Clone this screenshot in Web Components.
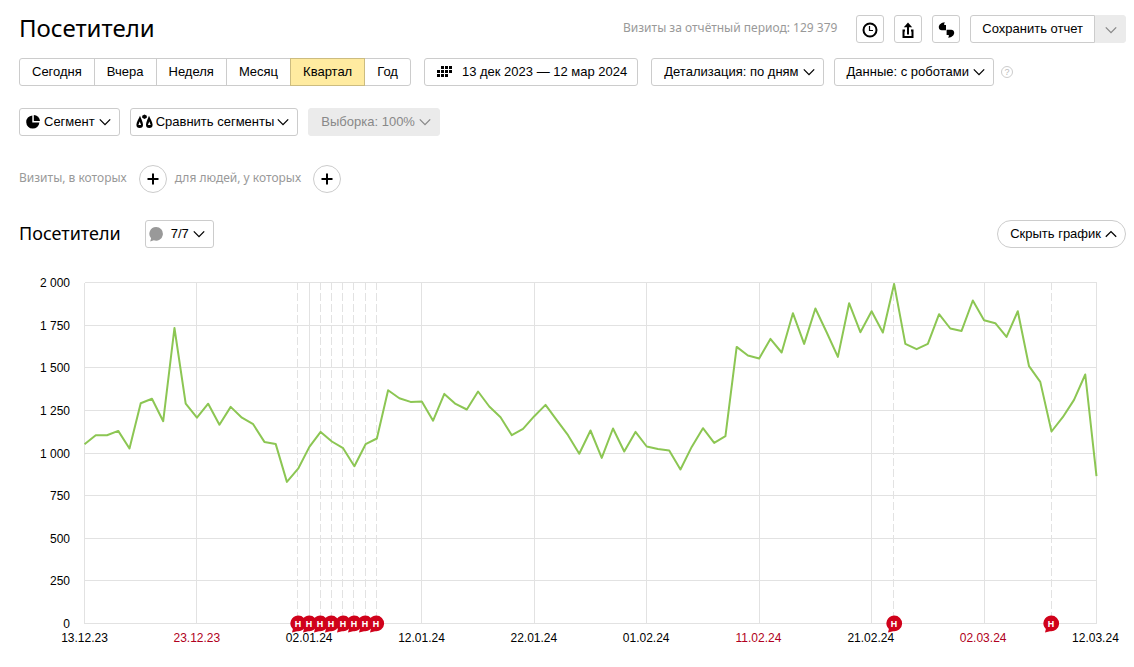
<!DOCTYPE html>
<html lang="ru">
<head>
<meta charset="utf-8">
<title>Посетители</title>
<style>
  body { margin: 0; background: #fff; color: #000; font: 13px/16px "Liberation Sans", Arial, sans-serif; }
</style>
</head>
<body>
<visitors-report></visitors-report>
<script>
const define = (name, html, setup) => {
  const template = document.createElement('template');
  template.innerHTML = html;
  customElements.define(name, class extends HTMLElement {
    connectedCallback() {
      if (this.shadowRoot) return;
      this.attachShadow({ mode: 'open' }).append(template.content.cloneNode(true));
      if (setup) setup(this, this.shadowRoot);
    }
  });
};

const ICONS = {
  down: [12, 12, '<path d="M.8 3.400 6 8.600l5.200-5.200" fill="none" stroke="currentColor" stroke-width="1.300"/>'],
  up: [12, 12, '<path d="M.8 8.800 6 3.600l5.200 5.200" fill="none" stroke="currentColor" stroke-width="1.300"/>'],
  clock: [18, 18, '<circle cx="9" cy="9" r="6.500" fill="none" stroke="currentColor" stroke-width="2"/><path d="M8.500 5v4.500h3.500" fill="none" stroke="currentColor" stroke-width="1.200"/>'],
  share: [18, 18, '<path d="M6 9.500H4.500V16h9V9.500H12" fill="none" stroke="currentColor" stroke-width="2"/><path d="M9 13.500V5" fill="none" stroke="currentColor" stroke-width="2"/><path d="M4.800 6.200 9 1.600l4.200 4.600z" fill="currentColor"/>'],
  quotes: [18, 18, '<path d="M7.800 1.200C4.300 1.600 1.800 3.500 1.800 6.200c0 1.800 1.300 3 3 3H9V4H7.200C7.100 2.900 7.300 2 7.800 1.200z" fill="currentColor"/><path d="M11.200 16.800c3.500-.4 6-2.300 6-5 0-1.800-1.300-3-3-3H9.600V14h2.200c.1 1.100-.1 2-.6 2.800z" fill="currentColor"/>'],
  calendar: [16, 12, '<path d="M4 0h3v3H4zM8 0h3v3H8zM12 0h3v3h-3zM0 4h3v3H0zM4 4h3v3H4zM8 4h3v3H8zM12 4h3v3h-3zM0 8h3v3H0zM4 8h3v3H4zM8 8h3v3H8z" fill="currentColor"/>'],
  pie: [14, 14, '<path d="M6.300.4v7.100h7.100A6.600 6.600 0 1 1 6.300.400z" fill="currentColor"/><path d="M7.800 0A6.300 6.300 0 0 1 14 6H7.800z" fill="currentColor"/>'],
  compare: [17, 16, '<path fill-rule="evenodd" d="M4 1.800C4.800 4.500 7 7.700 7 10.800A3.300 3.300 0 0 1 .4 10.800C.4 7.700 3.200 4.500 4 1.800zM3.700 7.500 2.400 11h2.700zM13 1.800c.8 2.700 3.600 5.900 3.600 9a3.300 3.300 0 0 1-6.600 0c0-3.100 2.200-6.300 3-9zM13.300 7.500 11.900 11h2.800z" fill="currentColor"/><path d="M6.200 1.800 8.500.6l2.300 1.200v2L8.500 5 6.200 3.800z" fill="currentColor"/>'],
  bubble: [14, 16, '<path d="M7 1a6.800 6.800 0 1 1-2.200 13.200L1.200 15.600l.9-3.300A6.800 6.800 0 0 1 7 1z" fill="#999"/>'],
  plus: [12, 12, '<path d="M6 .5v11M.5 6h11" fill="none" stroke="currentColor" stroke-width="2"/>']
};
define('m-icon', '<style>:host{display:block;flex:none}svg{display:block}</style>', (host, root) => {
  const [w, h, body] = ICONS[host.getAttribute('name')];
  root.innerHTML += `<svg width="${w}" height="${h}" viewBox="0 0 ${w} ${h}" aria-hidden="true">${body}</svg>`;
});

define('m-button', `
<style>
  :host { display: block; flex: none; }
  button { box-sizing: border-box; width: 100%; height: 28px; display: flex; align-items: center; gap: 4px; margin: 0;
    padding: 0 8px 0 12px; border: 1px solid #ccc; border-radius: 3px; background: #fff; color: inherit; font: inherit; white-space: nowrap; cursor: pointer; }
  slot { display: contents; }
  .label { flex: 1; }
  :host([lead]) button { padding-left: 6px; }
  :host([tight]) button { padding-left: 5px; gap: 3px; }
  :host([bubble]) button { padding-left: 3px; }
  :host([bubble]) .label { padding-left: 4px; }
  :host([date]) button { padding-right: 10px; gap: 9px; }
  :host([square]) button { width: 28px; padding: 2px 0 0; justify-content: center; }
  :host([square]) .label, :host([round]) .label { display: none; }
  :host([round]) button { width: 28px; padding: 0; justify-content: center; border-radius: 14px; }
  :host([pill]) button { border-radius: 14px; }
  :host([muted]) button { background: #ebebeb; border-color: #ebebeb; color: #888; cursor: default; }
  :host([main]) button { padding: 0 11px; border-radius: 3px 0 0 3px; }
  :host([more]) button { width: 31px; padding: 2px 0 0; border-radius: 0 3px 3px 0; justify-content: center; }
  :host([more]) .label { display: none; }
</style>
<button type="button"><slot name="before"></slot><span class="label"><slot></slot></span><slot name="after"></slot></button>`,
(host, root) => {
  const b = root.querySelector('button');
  if (host.hasAttribute('hint')) b.setAttribute('aria-label', host.getAttribute('hint'));
  if (host.hasAttribute('disabled')) b.disabled = true;
});

define('period-switch', `
<style>
  :host { display: flex; flex: none; }
  button { box-sizing: border-box; height: 28px; margin: 0 0 0 -1px; padding: 0 12px; border: 1px solid #ccc; background: #fff; color: inherit; font: inherit; white-space: nowrap; cursor: pointer; }
  button:first-of-type { margin-left: 0; border-radius: 3px 0 0 3px; }
  button:last-of-type { border-radius: 0 3px 3px 0; }
  button[aria-pressed=true] { background: #ffeba0; border-color: #ccbc80; z-index: 1; position: relative; }
</style>`, (host, root) => {
  for (const name of host.getAttribute('options').split(',')) {
    const b = document.createElement('button');
    b.type = 'button';
    b.textContent = name;
    b.setAttribute('aria-pressed', name === host.getAttribute('value'));
    root.append(b);
  }
});

define('note-marker', `
<style>
  :host { display: block; position: absolute; width: 16px; height: 20px; margin-left: -8px; }
  svg { display: block; overflow: visible; }
  text { font: bold 9px "Noto Sans", sans-serif; fill: #fff; text-anchor: middle; }
</style>
<svg width="16" height="20" viewBox="0 0 16 20"><path d="M8 .5a7.900 7.900 0 1 1-1 15.700L2 17.500l.9-3.400A7.900 7.900 0 0 1 8 .500z" fill="#d0021b"/><text x="8" y="12">Н</text></svg>`);

// Distance of each day's point below the top of a plot 341 units tall.
const SERIES = [161.7,152.7,152.7,148.4,166,120.7,116.2,138.7,45.500,121.2,135.2,121.2,142.2,124.4,135.2,141.7,159.4,161.4,
  199.4,186.2,164.4,149.400,159,165.7,183.7,161.7,156,107.7,115.7,119.4,119,138.2,111.4,121.4,127,109,124,134.7,152.7,146.4,
  133.7,122.4,137.7,152.7,171.2,148,175.4,146,169,149.4,164,166.4,168,187,164.4,145.7,160.400,153.7,64.4,73,76,56.4,70,30.7,
  61.4,26,49.700,74.4,20.7,49.700,28.700,50,1.400,61.4,66.7,61.4,31.700,46,48.4,18,37.7,40.7,54.4,28.700,83.700,99.400,149,134.7,117.4,92,193.7];
const HOLIDAYS = [19, 20, 21, 22, 23, 24, 25, 26, 72, 86];
const DATES = ['13.12.23', '23.12.23!', '02.01.24', '12.01.24', '22.01.24', '01.02.24', '11.02.24!', '21.02.24', '02.03.24!', '12.03.24'];

define('visitors-chart', `
<style>
  :host { display: grid; grid-template-columns: 51px 1fr; column-gap: 14px; padding-right: 30px; font-size: 12px; line-height: 16px; }
  .y { display: flex; flex-direction: column; justify-content: space-between; height: 357px; text-align: right; }
  .plot { position: relative; height: 341px; margin-top: 7px; }
  svg { display: block; width: 100%; height: 100%; overflow: visible; }
  .grid line { stroke: #e2e2e2; shape-rendering: crispEdges; }
  .notes line { stroke: #e2e2e2; stroke-dasharray: 8 3; shape-rendering: crispEdges; }
  polyline { fill: none; stroke: #8cc653; stroke-width: 2; vector-effect: non-scaling-stroke; stroke-linejoin: round; }
  .x { grid-column: 2; display: flex; justify-content: space-between; margin-top: -2px; }
  .x span { width: 1px; display: flex; justify-content: center; white-space: nowrap; }
  .x .off { color: #b00020; }
  note-marker { top: 333px; }
</style>
<div class="y"></div>
<div class="plot"><svg role="img" aria-label="Посетители по дням">
  <g class="notes"></g><g class="grid" transform="translate(.5 .5)"></g>
  <svg x="0.500" y="0.500" width="100%" height="341" viewBox="0 0 90 341" preserveAspectRatio="none"><polyline/></svg>
</svg></div>
<div class="x"></div>`, (host, root) => {
  const $ = s => root.querySelector(s);
  $('.y').innerHTML = ['2 000', '1 750', '1 500', '1 250', '1 000', '750', '500', '250', '0'].map(t => `<span>${t}</span>`).join('');
  let grid = '';
  for (let i = 0; i < 9; i++) { const y = i * 12.5 + '%'; grid += `<line x1="0" x2="100%" y1="${y}" y2="${y}"/>`; }
  for (let i = 0; i < 10; i++) { const x = i * 100 / 9 + '%'; grid += `<line x1="${x}" x2="${x}" y1="0" y2="100%"/>`; }
  $('.grid').innerHTML = grid;
  $('.notes').innerHTML = HOLIDAYS.filter(d => d % 10).map(d => `<line x1="${d / .9}%" x2="${d / .9}%" y1="0" y2="100%"/>`).join('');
  $('polyline').setAttribute('points', SERIES.map((y, i) => i + ',' + y).join(' '));
  $('.plot').insertAdjacentHTML('beforeend', HOLIDAYS.map(d => `<note-marker style="left:${d / .9}%"></note-marker>`).join(''));
  $('.x').innerHTML = DATES.map(t => `<span class="${t.endsWith('!') ? 'off' : ''}">${t.replace('!', '')}</span>`).join('');
});

define('visitors-report', `
<style>
  :host { display: block; padding: 15px 8px 16px 19px; }
  h1, h2 { margin: 0; font-family: "Noto Sans", sans-serif; font-weight: 400; line-height: 26px; }
  h1 { font-size: 24px; flex: 1; }
  h2 { font-size: 18px; margin-right: 24px; }
  .row { display: flex; align-items: flex-start; min-height: 28px; }
  .gray { font-family: "Noto Sans", sans-serif; font-size: 12px; line-height: 26px; color: #999; white-space: nowrap; }
  .tools { display: flex; gap: 10px; margin-left: 19px; }
  .save { display: flex; }
  .periods { margin-top: 15px; gap: 13px; }
  .data { display: flex; align-items: center; gap: 10px; }
  .help { box-sizing: border-box; width: 12px; height: 12px; margin: 0 0 0 -3px; padding: 0; border: 1px solid #ccc; border-radius: 6px; background: none; color: #bbb; font: 9px/10px "Liberation Sans", sans-serif; }
  .segments { margin-top: 22px; gap: 10px; }
  .filters { margin-top: 29px; gap: 8px; }
  .filters .gray { margin-right: 4px; }
  .chart-head { margin-top: 27px; }
  .hide { margin-left: auto; }
  visitors-chart { margin-top: 27px; }
</style>
<header class="row">
  <h1>Посетители</h1>
  <span class="gray">Визиты за отчётный период: 129 379</span>
  <div class="tools">
    <m-button square hint="История"><m-icon slot="before" name="clock"></m-icon></m-button>
    <m-button square hint="Экспорт"><m-icon slot="before" name="share"></m-icon></m-button>
    <m-button square hint="Комментарии"><m-icon slot="before" name="quotes"></m-icon></m-button>
    <div class="save"><m-button main>Сохранить отчет</m-button><m-button more muted hint="Ещё"><m-icon slot="after" name="down"></m-icon></m-button></div>
  </div>
</header>
<div class="row periods">
  <period-switch options="Сегодня,Вчера,Неделя,Месяц,Квартал,Год" value="Квартал"></period-switch>
  <m-button date><m-icon slot="before" name="calendar"></m-icon>13 дек 2023 — 12 мар 2024</m-button>
  <div class="data">
    <m-button>Детализация: по дням<m-icon slot="after" name="down"></m-icon></m-button>
    <m-button>Данные: с роботами<m-icon slot="after" name="down"></m-icon></m-button>
    <button class="help" type="button">?</button>
  </div>
</div>
<div class="row segments">
  <m-button lead><m-icon slot="before" name="pie"></m-icon>Сегмент<m-icon slot="after" name="down"></m-icon></m-button>
  <m-button tight><m-icon slot="before" name="compare"></m-icon>Сравнить сегменты<m-icon slot="after" name="down"></m-icon></m-button>
  <m-button muted disabled>Выборка: 100%<m-icon slot="after" name="down"></m-icon></m-button>
</div>
<div class="row filters">
  <span class="gray">Визиты, в которых</span><m-button round hint="Добавить условие на визиты"><m-icon slot="before" name="plus"></m-icon></m-button>
  <span class="gray">для людей, у которых</span><m-button round hint="Добавить условие на людей"><m-icon slot="before" name="plus"></m-icon></m-button>
</div>
<div class="row chart-head">
  <h2>Посетители</h2>
  <m-button bubble><m-icon slot="before" name="bubble"></m-icon>7/7<m-icon slot="after" name="down"></m-icon></m-button>
  <m-button class="hide" pill>Скрыть график<m-icon slot="after" name="up"></m-icon></m-button>
</div>
<visitors-chart></visitors-chart>`);
</script>
</body>
</html>
